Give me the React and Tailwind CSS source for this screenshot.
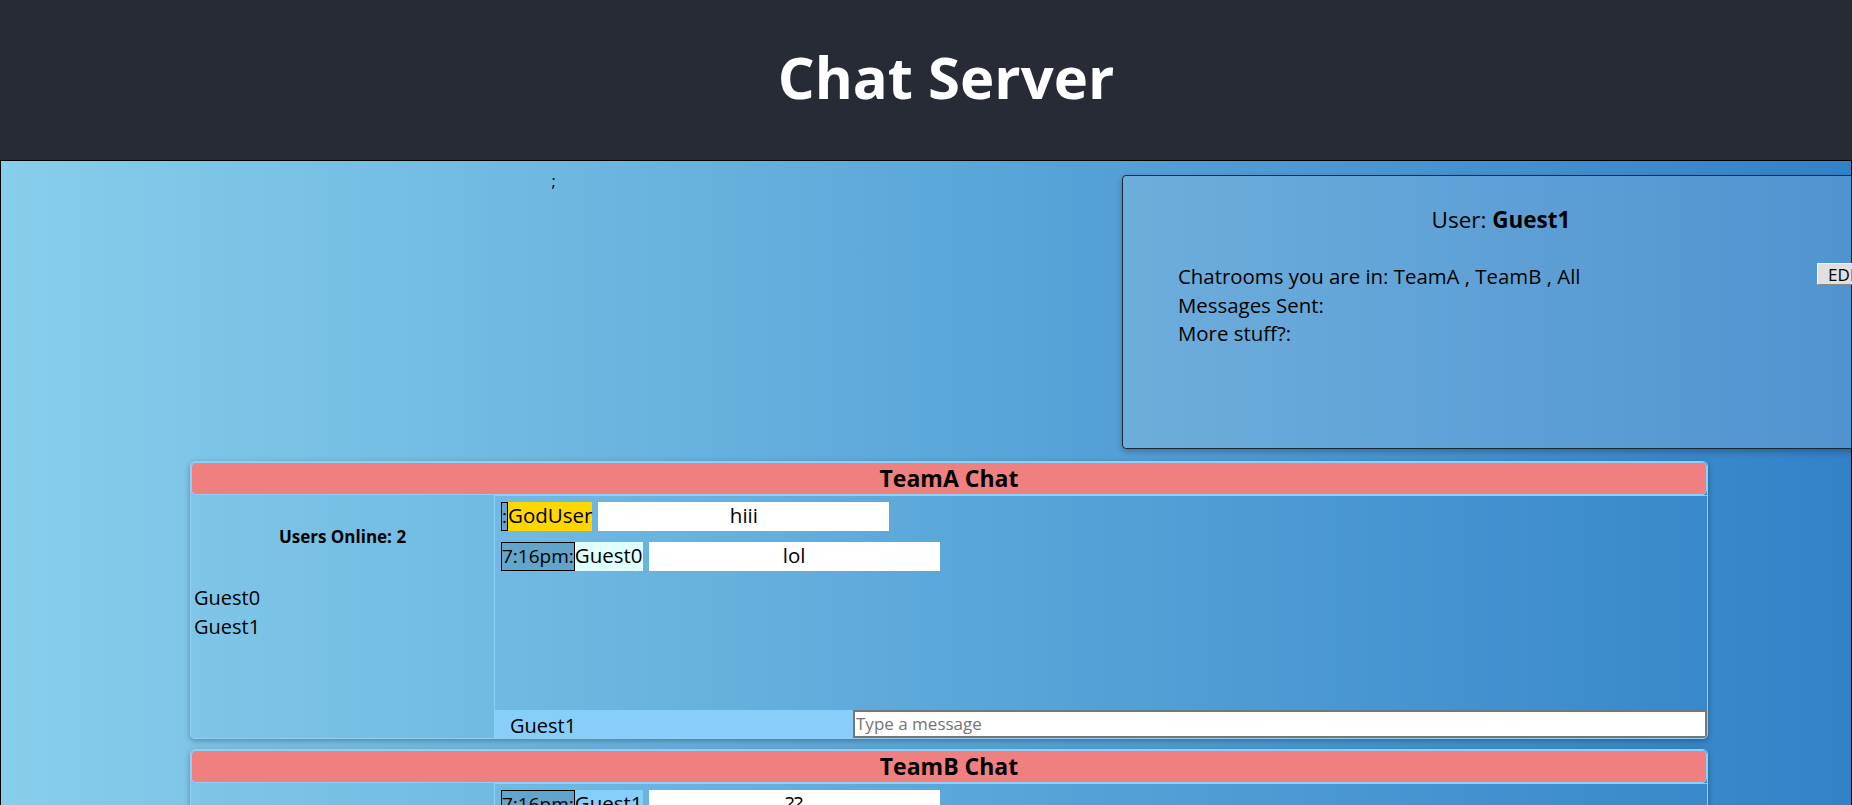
import React from "react";

const font = { fontFamily: '"Open Sans", "Noto Sans", sans-serif' };

function Msg({ time, user, userBg, text }) {
  return (
    <div className="flex items-stretch h-[29px] mb-[11px] text-[20.5px] leading-[27px] text-black">
      <span className="border border-black bg-black/10 text-[19px]">{time}:</span>
      <span className={userBg}>{user}</span>
      <span className="ml-[6px] w-[291px] bg-white text-center">{text}</span>
    </div>
  );
}

function ChatRoom({ name, users, messages }) {
  return (
    <div className="w-[1518px] mb-[10px] rounded-[5px] border border-[#8fd0f5] shadow-[0_2px_6px_rgba(0,0,0,0.3)] overflow-hidden">
      <div className="h-[33px] bg-[#f08080] rounded-[5px] border border-[#8fd0f5] flex items-center justify-center">
        <span className="text-[23px] font-bold text-black leading-none">{name} Chat</span>
      </div>
      <div className="flex">
        <div className="w-[303px] shrink-0 flex flex-col">
          <div className="text-center font-bold text-[17px] mt-[29px] text-black">Users Online: {users.length}</div>
          <div className="mt-[33px] pl-[3px] text-[20px] leading-[29px] text-black">
            {users.map((u) => (
              <div key={u}>{u}</div>
            ))}
          </div>
        </div>
        <div className="flex-1 flex flex-col border-l border-t border-[#8fd0f5]">
          <div className="h-[214px] pt-[6px] pl-[6px] overflow-hidden">
            {messages.map((m, i) => (
              <Msg key={i} {...m} />
            ))}
          </div>
          <div className="flex h-[28px]">
            <div className="w-[358px] shrink-0 bg-[#87cefa] pl-[15px] text-[20px] leading-[31px] text-black">Guest1</div>
            <input
              className="flex-1 bg-white border-2 border-[#767676] text-[17px] px-[1px] placeholder-[#757575] outline-none"
              placeholder="Type a message"
              style={font}
            />
          </div>
        </div>
      </div>
    </div>
  );
}

export default function App() {
  return (
    <div className="w-full min-h-[805px] overflow-hidden bg-[#272b35]" style={font}>
      <header className="h-[160px] bg-[#272b35] flex items-center justify-center pl-[40px]">
        <h1 className="text-[58px] font-bold text-white leading-none -mt-[6px]">Chat Server</h1>
      </header>
      <main className="border border-black bg-linear-to-r from-[#87ceeb] to-[#3182c8] min-h-[645px]">
        <div className="flex">
          <div className="w-[1105px] shrink-0 text-center text-[16px] text-black pt-[8px]">;</div>
          <div className="ml-[16px] w-[758px] shrink-0 mt-[14px] h-[274px] rounded-[4px] border border-[#1f2630] bg-white/15 shadow-[0_3px_6px_rgba(0,0,0,0.25)]">
            <div className="pt-[28px] text-center text-[22.5px] leading-[32px] text-black">
              User: <span className="font-bold">Guest1</span>
            </div>
            <div className="mt-[26px] flex justify-between pl-[55px] pr-[4px]">
              <div className="text-[20.4px] leading-[28.5px] text-black">
                <div>Chatrooms you are in: TeamA , TeamB , All</div>
                <div>Messages Sent:</div>
                <div>More stuff?:</div>
              </div>
              <button className="mt-[1px] h-[22px] px-[10px] text-[17px] leading-none bg-[#e0e0e0] border border-[#f4f4f4] border-b-[#888] border-r-[#888] text-black">
                EDIT
              </button>
            </div>
          </div>
        </div>
        <div className="pl-[189px] pt-[12px]">
          <ChatRoom
            name="TeamA"
            users={["Guest0", "Guest1"]}
            messages={[
              { time: "", user: "GodUser", userBg: "bg-[#ffd700]", text: "hiii" },
              { time: "7:16pm", user: "Guest0", userBg: "bg-[#e0ffff]", text: "lol" },
            ]}
          />
          <ChatRoom
            name="TeamB"
            users={["Guest0", "Guest1"]}
            messages={[
              { time: "7:16pm", user: "Guest1", userBg: "bg-[#87cefa]", text: "??" },
            ]}
          />
        </div>
      </main>
    </div>
  );
}
